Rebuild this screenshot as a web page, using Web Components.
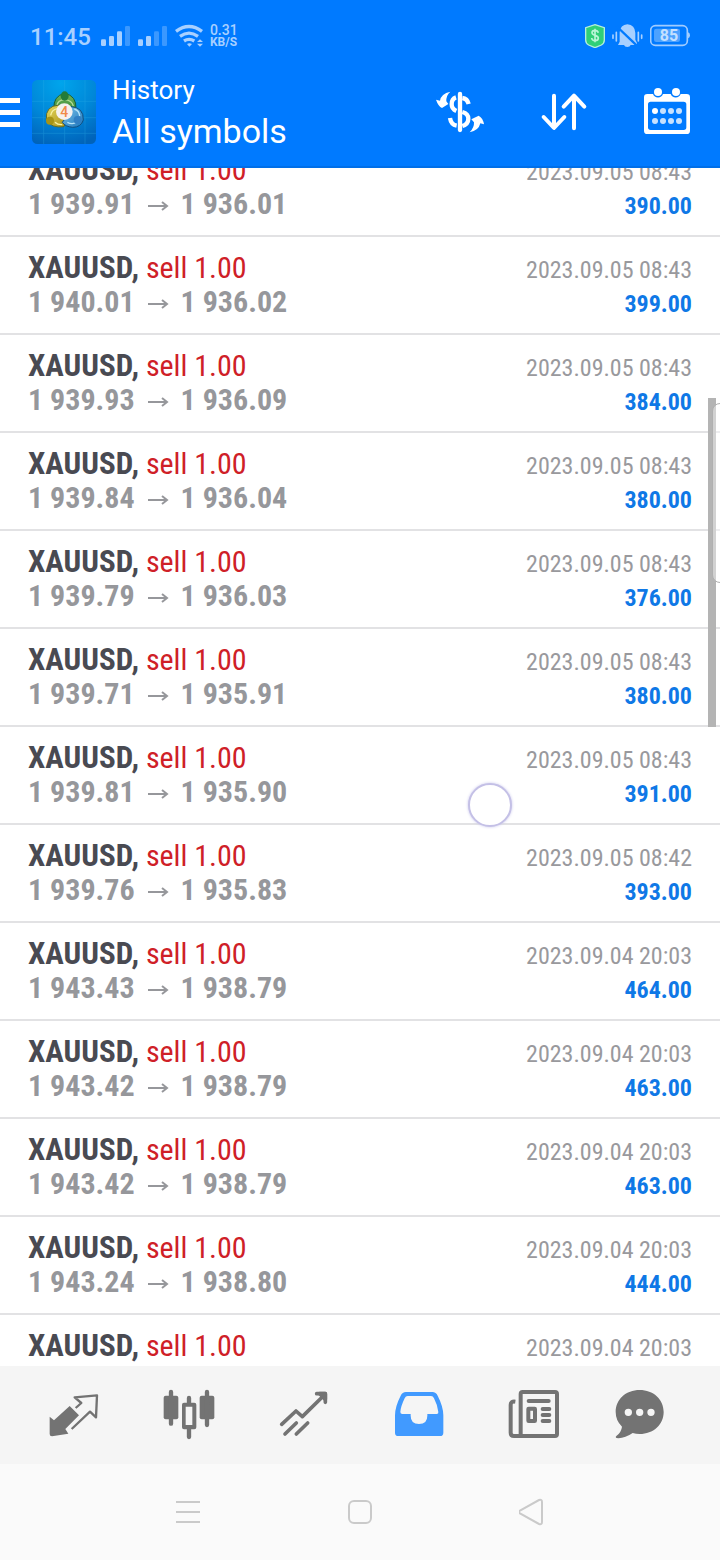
<!DOCTYPE html>
<html lang="en">
<head>
<meta charset="utf-8">
<meta name="viewport" content="width=device-width, initial-scale=1">
<title>History</title>
<style>
  body { margin: 0; font-family: Roboto, "Liberation Sans", sans-serif; }
</style>
</head>
<body>
<history-app></history-app>

<template id="status-bar">
  <style>
    :host { display: flex; align-items: center; box-sizing: border-box; height: 56px; padding: 16px 30px 0 30px; color: #a8d0ff; }
    svg { display: block; height: 24px; flex: none; }
    .time { font-size: 24px; line-height: 24px; font-weight: 500; margin-right: 9px; padding-top: 2px; }
    .rate { display: grid; font-weight: 700; font-size: 12px; line-height: 12px; margin-left: 6px; }
    .rate b { font-size: 14px; font-weight: 500; }
    .wifi { margin-left: 7px; }
    .right { display: flex; gap: 7px; margin-left: auto; }
  </style>
  <span class="time">11:45</span>
  <svg width="68" viewBox="300 72 204 72" fill="currentColor" aria-hidden="true">
    <rect x="303" y="118" width="15" height="20" rx="4"/><rect x="327" y="108" width="15" height="30" rx="4"/><rect x="351" y="94" width="15" height="44" rx="4"/><rect x="375" y="78" width="15" height="60" rx="4" opacity=".35"/>
    <rect x="414" y="118" width="15" height="20" rx="4"/><rect x="438" y="108" width="15" height="30" rx="4"/><rect x="462" y="94" width="15" height="44" rx="4" opacity=".35"/><rect x="486" y="78" width="15" height="60" rx="4" opacity=".35"/>
  </svg>
  <svg class="wifi" width="29" viewBox="525 72 87 72" fill="none" stroke="currentColor" stroke-width="10" aria-hidden="true">
    <path d="M528 94Q567 65 606 94M540 109Q567 90 594 109M552 123Q567 113 583 123"/>
    <path d="M561 132q7-5 15 0l-8 8zM591 126l9-8 9 8zM591 131l9 9 9-9z" fill="currentColor" stroke="none"/>
  </svg>
  <span class="rate"><b>0.31</b><span>KB/S</span></span>
  <span class="right">
    <svg width="20" viewBox="495 72 60 72" aria-hidden="true"><path d="M525 74l28 9v37q0 10-9 15l-19 8-19-8q-9-5-9-15V83z" fill="#30cf78" stroke="#b4efda" stroke-width="4"/><path d="M535 98q-2-7-10-7-9 0-9 7c0 10 19 6 19 16 0 6-4 8-10 8q-9 0-10-8M525 86v41" fill="none" stroke="#b8f5d6" stroke-width="5"/></svg>
    <svg width="31" viewBox="579 72 93 72" fill="currentColor" aria-hidden="true"><path d="M625 73q23 2 24 26v20l5 10v6h-19q-2 6-10 6t-10-6h-18l5-10V97q2-22 23-24z"/><path d="M592 78l64 61" stroke="#007aff" stroke-width="7"/><path d="M582 105v10M592 97v26M658 97v26M668 105v10" stroke="currentColor" stroke-width="5" stroke-linecap="round"/></svg>
    <svg width="40" viewBox="690 72 120 72" aria-hidden="true"><rect x="692" y="77" width="110" height="59" rx="14" fill="none" stroke="#a0ccff" stroke-width="5"/><path d="M804 97q6 2 6 9t-6 9z" fill="#a0ccff"/><rect x="702" y="86" width="78" height="40" rx="7" fill="#4da2ff"/><text x="747" y="123" text-anchor="middle" font-family="Roboto, sans-serif" font-size="48" font-weight="700" fill="#c4e0ff">85</text></svg>
  </span>
</template>

<template id="app-header">
  <style>
    :host { display: flex; align-items: center; height: 112px; color: #fff; }
    button { display: flex; justify-content: center; align-items: center; border: 0; padding: 0; background: none; color: inherit; }
    .menu { width: 20px; height: 64px; margin-right: 12px; }
    svg { display: block; }
    .titles { display: flex; flex-direction: column; margin-left: 16px; padding-top: 2px; flex: 1; min-width: 0; }
    .sub { font-size: 26px; line-height: 36px; }
    h1 { margin: 0; font-weight: 400; font-size: 34px; line-height: 46px; }
    .act { width: 104px; height: 104px; }
  </style>
  <button class="menu" aria-label="Menu"><svg width="20" height="30" fill="currentColor"><path d="M0 1h20v5H0zM0 13h20v5H0zM0 25h20v5H0z"/></svg></button>
  <svg width="64" height="64" viewBox="24 24 192 192" aria-hidden="true">
    <defs>
      <radialGradient id="bg" cx=".45" cy=".05" r="1"><stop offset="0" stop-color="#00a5ec"/><stop offset=".55" stop-color="#0087d8"/><stop offset="1" stop-color="#0063ba"/></radialGradient>
      <linearGradient id="gr" x2="0" y2="1"><stop stop-color="#74b75a"/><stop offset="1" stop-color="#2c8334"/></linearGradient>
      <linearGradient id="ye" x2="1" y2="1"><stop stop-color="#e6da60"/><stop offset="1" stop-color="#a98f14"/></linearGradient>
      <linearGradient id="bl" x2="1" y2="1"><stop stop-color="#7cc2ec"/><stop offset="1" stop-color="#1d78bb"/></linearGradient>
    </defs>
    <rect x="24" y="24" width="192" height="192" rx="16" fill="url(#bg)"/>
    <path d="M59 24v192M122 24v192M183 24v192M24 88h192M24 137h192M24 184h192" stroke="#35b4ea" stroke-width="2" opacity=".4"/>
    <path d="M90 110q-3-38 32-46 36 7 34 47l-13 12H99z" fill="url(#gr)" stroke="#145f3c" stroke-width="3"/>
    <path d="M99 101q2-17 23-18 22 2 26 19" fill="none" stroke="#b5dc98" stroke-width="4"/>
    <path d="M67 143q-4-41 38-44l24 43-9 22q-38 6-53-21z" fill="url(#ye)" stroke="#5c6b2c" stroke-width="3"/>
    <path d="M80 130q3-18 22-20M93 151q8 8 22 7" fill="none" stroke="#f7f1a0" stroke-width="4"/>
    <path d="M141 104q38 2 37 40-7 22-32 22-22-2-31-15l12-16z" fill="url(#bl)" stroke="#124f80" stroke-width="3"/>
    <path d="M151 111q15 5 16 21M130 151q16 8 28-1" fill="none" stroke="#b8e4f8" stroke-width="4"/>
    <ellipse cx="122" cy="72" rx="12" ry="14" fill="#237b3a"/><circle cx="78" cy="146" r="12" fill="#a69315"/><circle cx="161" cy="144" r="12" fill="#307fc4"/>
    <circle cx="121" cy="119" r="25" fill="#f6f1ee"/>
    <text x="121" y="134" text-anchor="middle" font-family="Roboto, sans-serif" font-size="42" font-weight="500" fill="#f08a48">4</text>
  </svg>
  <div class="titles"><span class="sub">History</span><h1>All symbols</h1></div>
  <button class="act" aria-label="Currency"><svg width="56" height="56" viewBox="36 252 168 168" fill="none" stroke="currentColor" stroke-width="13"><path d="M108 292q-13 4-13 21 0 14 14 20M127 294q15 2 19 18M127 336q18 5 18 20 0 16-18 22M90 354q3 20 20 23"/><path d="M120 282v108" stroke-linecap="round"/><path d="M48 299l12 3q3-21 31-27-13 11-12 29l6 8-19 12q-11-5-18-25zM192 373l-11-3q-5 22-32 27 14-14 13-30l-8-9 22-11q13 7 16 26z" fill="currentColor" stroke="none"/></svg></button>
  <button class="act" aria-label="Sort"><svg width="56" height="56" viewBox="348 252 168 168" fill="none" stroke="currentColor" stroke-width="12" stroke-linecap="round" stroke-linejoin="round"><path d="M402 287v96M371 351l31 33 31-33M462 385v-96M431 320l31-33 31 33"/></svg></button>
  <button class="act" aria-label="Select period"><svg width="56" height="56" viewBox="660 252 168 168" fill="currentColor"><path fill-rule="evenodd" d="M682 282h17a16 16 0 0 0 30 0h23a16 16 0 0 0 30 0h18q10 0 10 10v100q0 10-10 10H682q-10 0-10-10V292q0-10 10-10zM692 305q-8 0-8 8v69q0 8 8 8h99q8 0 8-8v-69q0-8-8-8z"/><circle cx="714" cy="276" r="12"/><circle cx="768" cy="276" r="12"/><circle cx="705" cy="333" r="9"/><g opacity=".78"><circle cx="729" cy="333" r="9"/><circle cx="753" cy="333" r="9"/><circle cx="777" cy="333" r="9"/><circle cx="705" cy="363" r="9"/><circle cx="729" cy="363" r="9"/><circle cx="753" cy="363" r="9"/><circle cx="777" cy="363" r="9"/></g></svg></button>
</template>

<template id="trade-row">
  <style>
    :host { display: grid; grid-template-columns: 1fr auto; grid-auto-rows: 34px; align-items: baseline; padding: 14px 28px; border-bottom: 2px solid #e2e2e4; font-family: "Roboto Condensed", Roboto, "Liberation Sans", sans-serif; font-size: 30px; line-height: 34px; white-space: nowrap; }
    .symbol { font-size: 31px; font-weight: 700; color: #494a52; }
    .deal { color: #cf2027; }
    .prices { display: flex; align-items: baseline; gap: 12px; font-weight: 700; color: #96979b; }
    .prices svg { align-self: center; flex: none; margin-top: 4px; }
    .date, .profit { font-size: 24px; text-align: right; }
    .date { color: #99999d; }
    .profit { font-weight: 700; color: #0f78e6; }
  </style>
  <span><span class="symbol">XAUUSD,</span> <span class="deal">sell 1.00</span></span>
  <span class="date"><slot name="date"></slot></span>
  <span class="prices"><slot name="open"></slot><svg width="22" height="12" viewBox="0 0 22 12" fill="none" stroke="currentColor" stroke-width="2" role="img" aria-label="to"><path d="M1 6h18M15 2l5 4-5 4"/></svg><slot name="close"></slot></span>
  <span class="profit"><slot name="profit"></slot></span>
</template>

<template id="trade-list">
  <style>
    :host { display: block; position: relative; flex: 1; min-height: 0; overflow: hidden; background: #fff; }
    .scroll { height: 100%; overflow-y: auto; scrollbar-width: none; }
    .thumb { position: absolute; right: 4px; top: 230px; width: 8px; height: 329px; background: #b4b4b4; }
    .edge { position: absolute; right: -8px; top: 235px; width: 14px; height: 178px; border: 1px solid #b0b0b0; border-radius: 8px; background: rgba(255,255,255,.4); }
    .touch { position: absolute; left: 468px; top: 615px; width: 40px; height: 40px; border: 2px solid #c4c0e6; border-radius: 50%; background: #fff; box-shadow: 0 0 3px #c9c6ec; }
  </style>
  <div class="scroll"></div>
  <div class="thumb"></div><div class="edge"></div><div class="touch"></div>
</template>

<template id="tab-bar">
  <style>
    :host { display: block; background: #f5f5f5; color: #737373; }
    nav { display: flex; height: 98px; padding: 0 13px 0 17px; }
    button { flex: 1; display: flex; align-items: center; justify-content: center; border: 0; padding: 0; background: none; color: inherit; }
    .on { color: #419aff; }
    svg { display: block; overflow: visible; }
  </style>
  <nav aria-label="Sections">
    <button aria-label="Quotes"><svg width="56" height="56" viewBox="140 81 168 168"><path d="M208 138l28 28-41 41 9 14-49 8q-7 0-7-7v-52l13 11z" fill="currentColor"/><path d="M226 144l17-15-20-17 67-6-3 66-18-17-55 52" fill="none" stroke="currentColor" stroke-width="7" stroke-linejoin="round"/></svg></button>
    <button aria-label="Charts"><svg width="56" height="56" viewBox="484 81 168 168" fill="currentColor"><rect x="489" y="107" width="44" height="71" rx="6"/><rect x="597" y="107" width="44" height="71" rx="6"/><path fill-rule="evenodd" d="M550 128h31q6 0 6 6v68q0 6-6 6h-31q-6 0-6-6v-68q0-6 6-6zm5 12v55h20v-55z"/><path d="M511 96v95M619 96v99M565 114v14M565 208v23" stroke="currentColor" stroke-width="13" stroke-linecap="round"/></svg></button>
    <button aria-label="Trade"><svg width="56" height="56" viewBox="110 81 168 168" fill="none" stroke="currentColor" stroke-width="11" stroke-linecap="round" stroke-linejoin="round"><path d="M124 193l43-40 19 17 66-65M229 101h26v26M134 222l34-33M168 222l34-33"/><path d="M238 101h17v17z" fill="currentColor"/></svg></button>
    <button class="on" aria-label="History" aria-current="page"><svg width="56" height="56" viewBox="454 81 168 168" fill="currentColor"><path fill-rule="evenodd" d="M496 96h79q11 0 16 11 17 33 17 59v52q0 10-10 10H473q-10 0-10-10v-52q0-26 17-59 5-11 16-11zm5 12q-6 0-9 7-12 25-13 41 0 6 6 6h25v5q0 25 25 25t25-25v-5h28q6 0 5-6-2-20-13-41-3-7-9-7z"/></svg></button>
    <button aria-label="News"><svg width="56" height="56" viewBox="80 81 168 168" fill="none" stroke="currentColor" stroke-width="12" stroke-linecap="round" stroke-linejoin="round"><rect x="121" y="96" width="109" height="132" rx="6"/><path d="M145 123h60M187 147h20M187 165h20M187 183h20"/><rect x="144" y="146" width="20" height="37" rx="1"/><path d="M105 125q-14-2-14 10v83q0 10 10 10h24" stroke-linecap="butt"/></svg></button>
    <button aria-label="Messages"><svg width="56" height="56" viewBox="424 81 168 168" fill="currentColor"><path fill-rule="evenodd" d="M477 90c41 0 72 28 72 66s-31 66-72 66q-11 0-21-3-26 18-49 15-4-3 0-6 15-11 17-28-19-18-19-44c0-38 31-66 72-66zM443 146a11 11 0 1 0 0 22 11 11 0 0 0 0-22zm34 0a11 11 0 1 0 0 22 11 11 0 0 0 0-22zm34 0a11 11 0 1 0 0 22 11 11 0 0 0 0-22z"/></svg></button>
  </nav>
</template>

<template id="system-nav">
  <style>
    :host { display: flex; box-sizing: border-box; height: 96px; padding: 0 14%; background: #fafafa; color: #cacaca; }
    button { flex: 1; display: flex; align-items: center; justify-content: center; border: 0; padding: 0; background: none; color: inherit; }
    svg { display: block; fill: none; stroke: currentColor; stroke-width: 2; }
  </style>
  <button aria-label="Recent apps"><svg width="28" height="28"><path d="M3 4h24M3 14h24M3 24h24"/></svg></button>
  <button aria-label="Home"><svg width="28" height="28"><rect x="3" y="3" width="22" height="22" rx="5"/></svg></button>
  <button aria-label="Back"><svg width="28" height="28"><path d="M1 12.500Q-1 14 1 15.500L20 26Q23 27 23 24V4Q23 1 20 2Z"/></svg></button>
</template>

<template id="history-app">
  <style>
    :host { display: flex; flex-direction: column; height: 100vh; overflow: hidden; }
    header { flex: none; background: #007aff; box-shadow: inset 0 -2px #006fe8; }
    tab-bar, system-nav { flex: none; }
  </style>
  <header><status-bar></status-bar><app-header></app-header></header>
  <trade-list></trade-list>
  <tab-bar></tab-bar>
  <system-nav></system-nav>
</template>

<script>
  const trades = [
    ["1 939.91", "1 936.01", "2023.09.05 08:43", "390.00"],
    ["1 940.01", "1 936.02", "2023.09.05 08:43", "399.00"],
    ["1 939.93", "1 936.09", "2023.09.05 08:43", "384.00"],
    ["1 939.84", "1 936.04", "2023.09.05 08:43", "380.00"],
    ["1 939.79", "1 936.03", "2023.09.05 08:43", "376.00"],
    ["1 939.71", "1 935.91", "2023.09.05 08:43", "380.00"],
    ["1 939.81", "1 935.90", "2023.09.05 08:43", "391.00"],
    ["1 939.76", "1 935.83", "2023.09.05 08:42", "393.00"],
    ["1 943.43", "1 938.79", "2023.09.04 20:03", "464.00"],
    ["1 943.42", "1 938.79", "2023.09.04 20:03", "463.00"],
    ["1 943.42", "1 938.79", "2023.09.04 20:03", "463.00"],
    ["1 943.24", "1 938.80", "2023.09.04 20:03", "444.00"],
    ["", "", "2023.09.04 20:03", ""]
  ];
  class Templated extends HTMLElement {
    constructor() {
      super();
      this.attachShadow({ mode: "open" }).append(
        document.getElementById(this.localName).content.cloneNode(true));
    }
  }
  class TradeRow extends Templated {
    set trade([open, close, date, profit]) {
      for (const [slot, text] of Object.entries({ open, close, date, profit })) {
        const span = document.createElement("span");
        span.slot = slot;
        span.textContent = text;
        this.append(span);
      }
    }
  }
  class TradeList extends Templated {
    connectedCallback() {
      const box = this.shadowRoot.querySelector(".scroll");
      for (const t of trades) {
        const row = document.createElement("trade-row");
        row.trade = t;
        box.append(row);
      }
      requestAnimationFrame(() => { box.scrollTop = 29; });
    }
  }
  customElements.define("trade-row", TradeRow);
  customElements.define("trade-list", TradeList);
  for (const name of ["status-bar", "app-header", "tab-bar", "system-nav", "history-app"])
    customElements.define(name, class extends Templated {});
</script>
</body>
</html>
